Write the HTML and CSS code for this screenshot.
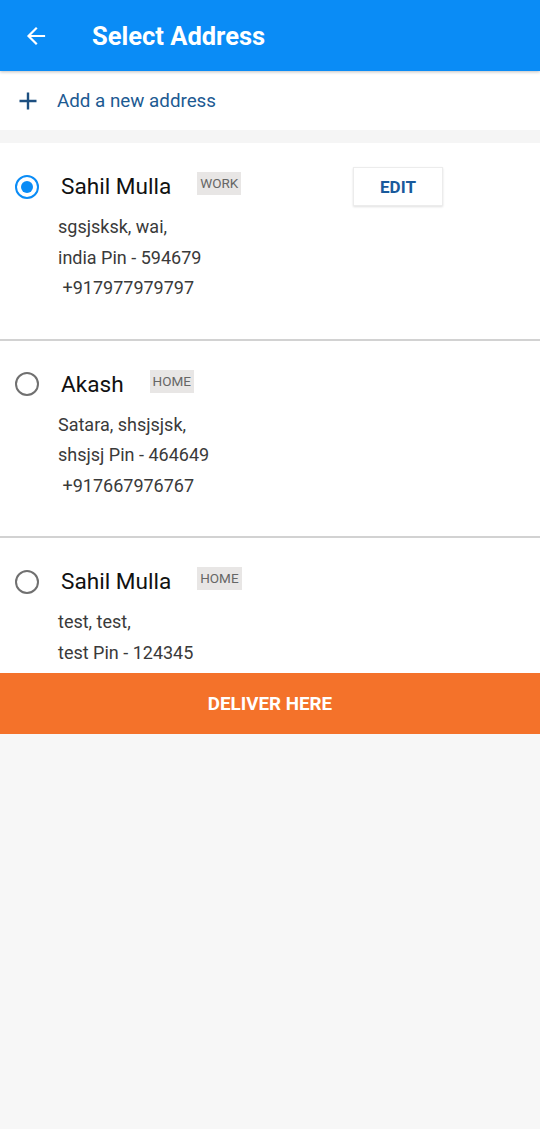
FILE: index.html
```html
<!DOCTYPE html>
<html>
<head>
<meta charset="utf-8">
<link rel="stylesheet" href="styles.css">
</head>
<body>
<div class="app">
  <header class="topbar">
    <svg class="back" width="24" height="24" viewBox="0 0 24 24"><path d="M20 12H5M12 4.5L4.5 12L12 19.5" fill="none" stroke="#fff" stroke-width="2.2" stroke-linecap="square"/></svg>
    <h1 class="title">Select Address</h1>
  </header>
  <div class="add-row">
    <svg class="plus" width="20" height="20" viewBox="0 0 20 20"><path d="M10 1.5V18.5M1.5 10H18.5" stroke="#1c4f80" stroke-width="2.4"/></svg>
    <span class="add-text">Add a new address</span>
  </div>
  <div class="spacer"></div>
  <div class="list">
    <div class="card">
      <div class="radio-col"><span class="radio checked"></span></div>
      <div class="content">
        <div class="head">
          <span class="name">Sahil Mulla</span>
          <span class="tag">WORK</span>
          <span class="edit">EDIT</span>
        </div>
        <div class="line">sgsjsksk, wai,</div>
        <div class="line">india Pin - 594679</div>
        <div class="line">&nbsp;+917977979797</div>
      </div>
    </div>
    <div class="card">
      <div class="radio-col"><span class="radio"></span></div>
      <div class="content">
        <div class="head">
          <span class="name">Akash</span>
          <span class="tag">HOME</span>
        </div>
        <div class="line">Satara, shsjsjsk,</div>
        <div class="line">shsjsj Pin - 464649</div>
        <div class="line">&nbsp;+917667976767</div>
      </div>
    </div>
    <div class="card">
      <div class="radio-col"><span class="radio"></span></div>
      <div class="content">
        <div class="head">
          <span class="name">Sahil Mulla</span>
          <span class="tag">HOME</span>
        </div>
        <div class="line">test, test,</div>
        <div class="line">test Pin - 124345</div>
      </div>
    </div>
  </div>
  <div class="deliver">DELIVER HERE</div>
</div>
</body>
</html>
```
FILE: styles.css
```css
* { box-sizing: border-box; }
html, body { margin: 0; padding: 0; }
body {
  background: #f7f7f7;
  font-family: Roboto, "Noto Sans", sans-serif;
  width: 540px;
  min-height: 1129px;
}
.app { display: flex; flex-direction: column; }
.topbar {
  height: 71px;
  background: #0a8cf6;
  display: flex;
  align-items: center;
  padding-left: 24px;
  box-shadow: 0 1px 3px rgba(0,0,0,0.25);
  position: relative;
  z-index: 1;
}
.back { display: block; }
.title {
  margin: 0 0 0 44px;
  color: #fff;
  font-size: 25.5px;
  font-weight: 700;
}
.add-row {
  height: 59px;
  background: #fff;
  display: flex;
  align-items: center;
  padding-left: 18px;
}
.plus { display: block; }
.add-text {
  margin-left: 19px;
  font-size: 18.8px;
  color: #1c5a92;
}
.spacer { height: 13px; background: #f5f5f5; }
.list {
  height: 530px;
  overflow: hidden;
  background: #fff;
}
.card {
  display: flex;
  background: #fff;
  padding: 24px 97px 35px 15px;
  border-bottom: 2px solid #d2d2d2;
}
.radio-col {
  width: 43px;
  flex: none;
  height: 39px;
  display: flex;
  align-items: center;
}
.radio {
  width: 24px;
  height: 24px;
  border-radius: 50%;
  border: 2.2px solid #707070;
  display: flex;
  align-items: center;
  justify-content: center;
}
.radio.checked { border-color: #0a8cf6; }
.radio.checked::after {
  content: "";
  width: 12px;
  height: 12px;
  border-radius: 50%;
  background: #0a8cf6;
}
.content { flex: 1; }
.head {
  height: 39px;
  display: flex;
  align-items: center;
  margin-bottom: 6px;
}
.name {
  font-size: 22.6px;
  color: #111;
  margin-left: 3px;
}
.tag {
  margin-left: 26px;
  margin-top: -6px;
  background: #e8e6e5;
  color: #666;
  font-size: 13.5px;
  padding: 4px 3px;
  line-height: 15px;
}
.edit {
  margin-left: auto;
  width: 90px;
  height: 39px;
  display: flex;
  align-items: center;
  justify-content: center;
  color: #195a9c;
  font-weight: 700;
  font-size: 17px;
  background: #fff;
  border: 1px solid #ececec;
  box-shadow: 0 1px 2px rgba(0,0,0,0.12);
}
.line {
  font-size: 18px;
  line-height: 30.5px;
  color: #3a3a3a;
}
.deliver {
  height: 61px;
  background: #f4722a;
  color: #fff;
  font-weight: 700;
  font-size: 18.8px;
  display: flex;
  align-items: center;
  justify-content: center;
}
```
